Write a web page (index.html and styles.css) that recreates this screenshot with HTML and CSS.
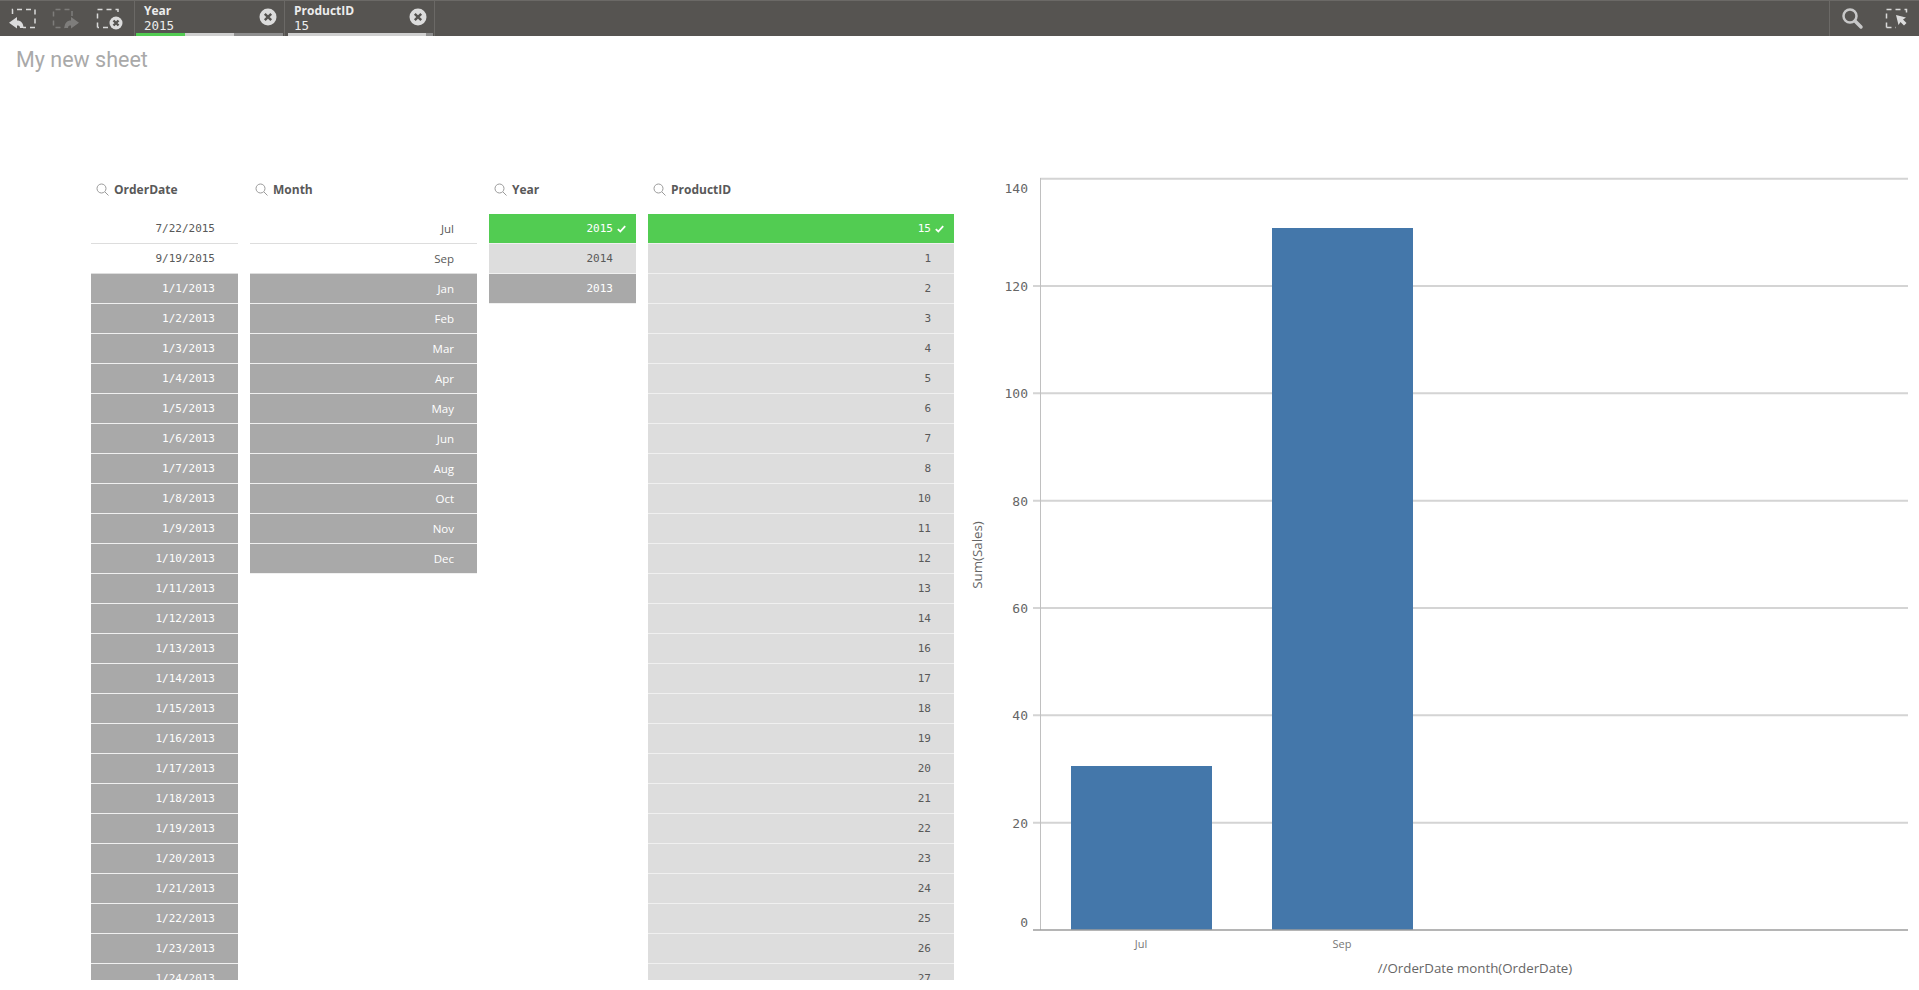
FILE: index.html
```html
<!DOCTYPE html>
<html lang="en">
<head>
    <meta charset="UTF-8">
    <title>My new sheet</title>
    <link rel="stylesheet" href="styles.css">
</head>
<body>
    <div class="toolbar">
        <div class="tool-group">
            <svg class="tool" width="44" height="36" viewBox="0 0 44 36">
                <path class="dash" d="M12.500 14V9.500H35V27.500H23" stroke-dasharray="5 4" />
                <path class="solid" d="M9 22.700L17 17v3.500c4 0 6.500 2.500 6.500 7.500H20c0-2-1-2.500-3-2.500v3z" />
            </svg>
            <svg class="tool tool-off" width="44" height="36" viewBox="0 0 44 36">
                <path class="dash" d="M28 16V9.500H9.500V27.500H21" stroke-dasharray="5 4" />
                <path class="solid" d="M35 22.700L27 17v3.500c-4 0-6.500 2.500-6.500 7.500H24c0-2 1-2.500 3-2.500v3z" />
            </svg>
            <svg class="tool" width="46" height="36" viewBox="0 0 46 36">
                <path class="dash" d="M9.500 27.500V9.500H30V16M20 27.500H9.500" stroke-dasharray="5 4" />
                <circle class="solid" cx="28" cy="23" r="6.500" />
                <path class="cross" d="M25.500 20.500l5 5M30.500 20.500l-5 5" />
            </svg>
        </div>
        <div class="chip">
            <div class="chip-text">
                <div class="chip-name">Year</div>
                <div class="chip-value">2015</div>
            </div>
            <svg class="chip-close" width="18" height="18" viewBox="0 0 18 18">
                <circle class="solid" cx="9" cy="9" r="8.500" />
                <path class="cross" d="M5.800 5.800l6.400 6.400M12.200 5.800l-6.400 6.400" />
            </svg>
            <div class="chip-state">
                <span class="state-green"></span>
                <span class="state-light"></span>
                <span class="state-dark"></span>
            </div>
        </div>
        <div class="chip">
            <div class="chip-text">
                <div class="chip-name">ProductID</div>
                <div class="chip-value">15</div>
            </div>
            <svg class="chip-close" width="18" height="18" viewBox="0 0 18 18">
                <circle class="solid" cx="9" cy="9" r="8.500" />
                <path class="cross" d="M5.800 5.800l6.400 6.400M12.200 5.800l-6.400 6.400" />
            </svg>
            <div class="chip-state chip-state-single">
                <span class="state-wide"></span>
                <span class="state-end"></span>
            </div>
        </div>
        <div class="tool-spacer"></div>
        <div class="tool-group tool-group-right">
            <svg class="tool" width="44" height="36" viewBox="0 0 44 36">
                <circle class="ring" cx="20" cy="16" r="6.500" />
                <path class="handle" d="M25 21l6 6" />
            </svg>
            <svg class="tool" width="45" height="36" viewBox="0 0 45 36">
                <path class="dash" d="M12.500 27.500V9.500H32.500V14M12.500 27.500H22" stroke-dasharray="5 4" />
                <path class="solid" d="M22 15l10 2.500-3 2 3.500 3.500-2.500 2.500-3.500-3.500-2 3z" />
            </svg>
        </div>
    </div>

    <h1 class="sheet-title">My new sheet</h1>

    <div class="board">
        <div class="filter filter-date">
            <div class="filter-head">
                <svg class="lens" width="13" height="13" viewBox="0 0 13 13"><circle cx="5.500" cy="5.500" r="4.500" /><path d="M9 9l3.500 3.500" /></svg>
                <span>OrderDate</span>
            </div>
            <ul class="filter-list">
                <li class="row num possible">7/22/2015</li>
                <li class="row num possible">9/19/2015</li>
                <li class="row num excluded">1/1/2013</li>
                <li class="row num excluded">1/2/2013</li>
                <li class="row num excluded">1/3/2013</li>
                <li class="row num excluded">1/4/2013</li>
                <li class="row num excluded">1/5/2013</li>
                <li class="row num excluded">1/6/2013</li>
                <li class="row num excluded">1/7/2013</li>
                <li class="row num excluded">1/8/2013</li>
                <li class="row num excluded">1/9/2013</li>
                <li class="row num excluded">1/10/2013</li>
                <li class="row num excluded">1/11/2013</li>
                <li class="row num excluded">1/12/2013</li>
                <li class="row num excluded">1/13/2013</li>
                <li class="row num excluded">1/14/2013</li>
                <li class="row num excluded">1/15/2013</li>
                <li class="row num excluded">1/16/2013</li>
                <li class="row num excluded">1/17/2013</li>
                <li class="row num excluded">1/18/2013</li>
                <li class="row num excluded">1/19/2013</li>
                <li class="row num excluded">1/20/2013</li>
                <li class="row num excluded">1/21/2013</li>
                <li class="row num excluded">1/22/2013</li>
                <li class="row num excluded">1/23/2013</li>
                <li class="row num excluded">1/24/2013</li>
            </ul>
        </div>

        <div class="filter filter-month">
            <div class="filter-head">
                <svg class="lens" width="13" height="13" viewBox="0 0 13 13"><circle cx="5.500" cy="5.500" r="4.500" /><path d="M9 9l3.500 3.500" /></svg>
                <span>Month</span>
            </div>
            <ul class="filter-list">
                <li class="row possible">Jul</li>
                <li class="row possible">Sep</li>
                <li class="row excluded">Jan</li>
                <li class="row excluded">Feb</li>
                <li class="row excluded">Mar</li>
                <li class="row excluded">Apr</li>
                <li class="row excluded">May</li>
                <li class="row excluded">Jun</li>
                <li class="row excluded">Aug</li>
                <li class="row excluded">Oct</li>
                <li class="row excluded">Nov</li>
                <li class="row excluded">Dec</li>
            </ul>
        </div>

        <div class="filter filter-year">
            <div class="filter-head">
                <svg class="lens" width="13" height="13" viewBox="0 0 13 13"><circle cx="5.500" cy="5.500" r="4.500" /><path d="M9 9l3.500 3.500" /></svg>
                <span>Year</span>
            </div>
            <ul class="filter-list">
                <li class="row num selected">2015<svg class="check" width="9" height="8" viewBox="0 0 9 8"><path d="M.8 4.200l2.500 2.300L8.200 1.200" /></svg></li>
                <li class="row num alternative">2014</li>
                <li class="row num excluded">2013</li>
            </ul>
        </div>

        <div class="filter filter-product">
            <div class="filter-head">
                <svg class="lens" width="13" height="13" viewBox="0 0 13 13"><circle cx="5.500" cy="5.500" r="4.500" /><path d="M9 9l3.500 3.500" /></svg>
                <span>ProductID</span>
            </div>
            <ul class="filter-list">
                <li class="row num selected">15<svg class="check" width="9" height="8" viewBox="0 0 9 8"><path d="M.8 4.200l2.500 2.300L8.200 1.200" /></svg></li>
                <li class="row num alternative">1</li>
                <li class="row num alternative">2</li>
                <li class="row num alternative">3</li>
                <li class="row num alternative">4</li>
                <li class="row num alternative">5</li>
                <li class="row num alternative">6</li>
                <li class="row num alternative">7</li>
                <li class="row num alternative">8</li>
                <li class="row num alternative">10</li>
                <li class="row num alternative">11</li>
                <li class="row num alternative">12</li>
                <li class="row num alternative">13</li>
                <li class="row num alternative">14</li>
                <li class="row num alternative">16</li>
                <li class="row num alternative">17</li>
                <li class="row num alternative">18</li>
                <li class="row num alternative">19</li>
                <li class="row num alternative">20</li>
                <li class="row num alternative">21</li>
                <li class="row num alternative">22</li>
                <li class="row num alternative">23</li>
                <li class="row num alternative">24</li>
                <li class="row num alternative">25</li>
                <li class="row num alternative">26</li>
                <li class="row num alternative">27</li>
            </ul>
        </div>

        <!-- chart: viewBox origin is the top left of the chart box, x 960 / y 170 on the page -->
        <svg class="chart" width="959" height="820" viewBox="0 0 959 820">
            <path class="grid" d="M80 8.700H948M73 116H948M73 223.300H948M73 330.700H948M73 438H948M73 545.300H948M73 652.700H948" />
            <path class="axis-y" d="M80.500 8V760" />
            <rect class="bar" x="111" y="596" width="141" height="164" />
            <rect class="bar" x="312" y="58" width="141" height="702" />
            <path class="axis-x" d="M73 760H948" />
            <text class="tick" x="68" y="23">140</text>
            <text class="tick" x="68" y="121">120</text>
            <text class="tick" x="68" y="228">100</text>
            <text class="tick" x="68" y="336">80</text>
            <text class="tick" x="68" y="443">60</text>
            <text class="tick" x="68" y="550">40</text>
            <text class="tick" x="68" y="658">20</text>
            <text class="tick" x="68" y="757">0</text>
            <text class="cat" x="181" y="778">Jul</text>
            <text class="cat" x="382" y="778">Sep</text>
            <text class="axis-title" x="515" y="803">//OrderDate month(OrderDate)</text>
            <text class="axis-title" transform="translate(22 385) rotate(-90)">Sum(Sales)</text>
        </svg>
    </div>
</body>
</html>
```

FILE: styles.css
```css
body {
    margin: 0;
    height: 990px;
    overflow: hidden;
    background-color: #fff;
    font-family: "Open Sans", sans-serif;
}

/* top bar */
.toolbar {
    display: flex;
    height: 36px;
    background-color: #565451;
    box-shadow: inset 0 1px 0 #6b6966;
}
.tool-group {
    display: flex;
    width: 134px;
    flex-shrink: 0;
}
.tool-group-right {
    width: 89px;
    border-left: 1px solid #6b6966;
}
.tool {
    display: block;
    flex-shrink: 0;
}
.tool-off {
    opacity: 0.3;
}
.tool-spacer {
    flex: 1;
}
.dash {
    fill: none;
    stroke: #d9d9d9;
    stroke-width: 1.5;
}
.solid {
    fill: #dcdcdc;
}
.cross {
    fill: none;
    stroke: #565451;
    stroke-width: 2.4;
}
.ring {
    fill: none;
    stroke: #c8c8c8;
    stroke-width: 2.5;
}
.handle {
    fill: none;
    stroke: #c8c8c8;
    stroke-width: 3.5;
    stroke-linecap: round;
}

.chip {
    position: relative;
    display: flex;
    justify-content: space-between;
    width: 151px;
    box-sizing: border-box;
    padding: 3px 7px 0 9px;
    border-right: 1px solid #6b6966;
    border-left: 1px solid #6b6966;
    margin-right: -1px;
    color: #ececec;
}
.chip-name {
    font-size: 12px;
    font-weight: 700;
    line-height: 15px;
}
.chip-value {
    font-family: "DejaVu Sans Mono", monospace;
    font-size: 12.500px;
    line-height: 15px;
}
.chip-close {
    margin-top: 5px;
}
.chip-state {
    position: absolute;
    left: 1px;
    right: 1px;
    bottom: 0;
    display: flex;
    height: 3px;
}
.chip-state-single {
    left: 3px;
}
.state-green {
    width: 49px;
    background-color: #52cc52;
}
.state-light {
    width: 49px;
    background-color: #cfcfcf;
}
.state-dark {
    flex: 1;
    background-color: #8e8e8e;
}
.state-wide {
    flex: 1;
    background-color: #cfcfcf;
}
.state-end {
    width: 7px;
    background-color: #8e8e8e;
}

.sheet-title {
    height: 134px;
    box-sizing: border-box;
    margin: 0;
    padding: 11px 0 0 16px;
    color: #a9a9a9;
    font-family: Roboto, sans-serif;
    font-size: 21.500px;
    font-weight: 400;
    line-height: 26px;
}

/* filter panes and chart */
.board {
    display: flex;
    height: 820px;
    padding-left: 91px;
}
.filter {
    flex-shrink: 0;
    margin-right: 12px;
}
.filter-date,
.filter-year {
    width: 147px;
}
.filter-month {
    width: 227px;
}
.filter-product {
    width: 306px;
    margin-right: 6px;
}
.filter-head {
    display: flex;
    align-items: center;
    gap: 5px;
    height: 38px;
    padding: 0 0 6px 5px;
    color: #595959;
    font-size: 12px;
    font-weight: 700;
}
.lens {
    flex-shrink: 0;
    fill: none;
    stroke: #9a9a9a;
    stroke-width: 1;
}
.filter-list {
    height: 766px;
    margin: 0;
    padding: 0;
    overflow: hidden;
    list-style: none;
}
.row {
    display: flex;
    align-items: center;
    justify-content: flex-end;
    height: 29px;
    padding-right: 23px;
    border-bottom: 1px solid #f0f0f0;
    font-family: "Open Sans", sans-serif;
    font-size: 11.500px;
}
.num {
    font-family: "DejaVu Sans Mono", monospace;
    font-size: 11px;
}
.possible {
    background-color: #fff;
    border-bottom-color: #dddddd;
    color: #595959;
}
.excluded {
    background-color: #a9a9a9;
    color: #fff;
}
.alternative {
    background-color: #dddddd;
    color: #595959;
}
.selected {
    padding-right: 10px;
    background-color: #52cc52;
    color: #fff;
}
.check {
    margin-left: 4px;
    fill: none;
    stroke: #fff;
    stroke-width: 1.800;
}

.chart {
    display: block;
    flex-shrink: 0;
}
.grid {
    fill: none;
    stroke: #d4d4d4;
    stroke-width: 2;
}
.axis-y {
    fill: none;
    stroke: #c0c0c0;
    stroke-width: 1;
}
.axis-x {
    fill: none;
    stroke: #9c9c9c;
    stroke-width: 1.500;
}
.bar {
    fill: #4477aa;
}
.tick {
    fill: #666;
    font-family: "DejaVu Sans Mono", monospace;
    font-size: 13px;
    text-anchor: end;
}
.cat {
    fill: #777;
    font-family: "Open Sans", sans-serif;
    font-size: 11px;
    text-anchor: middle;
}
.axis-title {
    fill: #666;
    font-family: "Open Sans", sans-serif;
    font-size: 13.300px;
    text-anchor: middle;
}
```
